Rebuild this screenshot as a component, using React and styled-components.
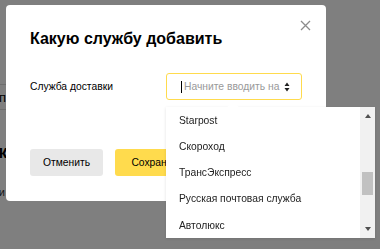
import React from "react";
import styled, { createGlobalStyle } from "styled-components";

const Global = createGlobalStyle`
  html, body { margin: 0; padding: 0; background: #fff; }
  body { font-family: "Liberation Sans", Arial, sans-serif; width: 380px; height: 249px; overflow: hidden; }
`;

const Page = styled.div`
  width: 380px;
  height: 249px;
  padding-top: 84px;
  box-sizing: border-box;
  display: flex;
  flex-direction: column;
`;

const PageRow = styled.div`
  width: 46px;
  margin-left: -40px;
  height: 24px;
  border-top: 1px solid #dcdcdc;
  border-bottom: 1px solid #dcdcdc;
  display: flex;
  align-items: center;
  justify-content: flex-end;
  font-size: 13px;
  color: #000;
  overflow: hidden;
`;

const PageHeading = styled.div`
  width: 46px;
  margin-left: -40px;
  margin-top: 30px;
  text-align: right;
  font-size: 18px;
  font-weight: bold;
  line-height: 24px;
  color: #000;
  white-space: nowrap;
`;

const PageNote = styled.div`
  width: 46px;
  margin-left: -41px;
  margin-top: 22px;
  text-align: right;
  font-size: 11px;
  color: #333;
  white-space: nowrap;
`;

const Overlay = styled.div`
  position: fixed;
  inset: 0;
  background: rgba(0, 0, 0, 0.5);
`;

const Modal = styled.div`
  position: fixed;
  top: 5px;
  left: 6px;
  width: 320px;
  height: 196px;
  box-sizing: border-box;
  background: #fff;
  border-radius: 4px;
  padding: 24px 24px 0;
  display: flex;
  flex-direction: column;
`;

const Title = styled.h2`
  margin: 0;
  font-size: 16px;
  line-height: 20px;
  font-weight: bold;
  color: #000;
`;

const Close = styled.button`
  position: absolute;
  top: 15px;
  right: 15px;
  width: 11px;
  height: 11px;
  padding: 0;
  border: 0;
  background: none;
  display: flex;
`;

const Field = styled.div`
  margin-top: 24px;
  display: flex;
  align-items: center;
`;

const Label = styled.label`
  width: 136px;
  font-size: 10.3px;
  line-height: 13px;
  color: #000;
`;

const InputWrap = styled.div`
  position: relative;
  width: 136px;
  height: 27px;
`;

const Input = styled.div`
  box-sizing: border-box;
  width: 100%;
  height: 100%;
  border: 1px solid #ffdb4d;
  border-radius: 3px;
  padding: 0 11px 0 14px;
  display: flex;
  align-items: center;
  overflow: hidden;
`;

const Caret = styled.span`
  width: 1px;
  height: 12px;
  background: #000;
  flex: none;
`;

const Placeholder = styled.span`
  flex: 1;
  font-size: 10.3px;
  color: #999;
  white-space: nowrap;
  overflow: hidden;
  margin: 0 3px 0 2px;
`;

const Popup = styled.div`
  position: absolute;
  top: 34px;
  left: 0;
  width: 209px;
  height: 131px;
  background: #fff;
  box-shadow: 0 1px 3px rgba(0, 0, 0, 0.12);
  display: flex;
`;

const Tail = styled.div`
  position: absolute;
  top: -4px;
  left: 63px;
  width: 8px;
  height: 8px;
  background: #fff;
  transform: rotate(45deg);
`;

const List = styled.ul`
  list-style: none;
  margin: 0;
  padding: 0;
  flex: 1;
  position: relative;
`;

const Item = styled.li`
  height: 26.25px;
  display: flex;
  align-items: center;
  padding-left: 13px;
  font-size: 10.3px;
  color: #222;
  white-space: nowrap;
`;

const Scrollbar = styled.div`
  width: 15px;
  background: #f1f1f1;
  position: relative;
  display: flex;
  flex-direction: column;
  justify-content: space-between;
  align-items: center;
  padding: 7px 0;
  box-sizing: border-box;
`;

const Thumb = styled.div`
  position: absolute;
  left: 2px;
  top: 65px;
  width: 11px;
  height: 23px;
  background: #c1c1c1;
`;

const Arrow = styled.span`
  width: 0;
  height: 0;
  border-left: 3.5px solid transparent;
  border-right: 3.5px solid transparent;
  ${(p) => (p.$down ? "border-top: 4px solid #505050;" : "border-bottom: 4px solid #505050;")}
`;

const Buttons = styled.div`
  margin-top: 49px;
  display: flex;
  gap: 12px;
`;

const Button = styled.button`
  height: 27px;
  width: ${(p) => p.$w}px;
  border: 0;
  border-radius: 3px;
  background: ${(p) => (p.$primary ? "#ffdb4d" : "#e8e8e8")};
  font-family: inherit;
  font-size: 10.3px;
  color: #000;
  padding: 0;
`;

const items = ["Starpost", "Скороход", "ТрансЭкспресс", "Русская почтовая служба", "Автолюкс"];

export default function App() {
  return (
    <>
      <Global />
      <Page>
        <PageRow>Тип</PageRow>
        <PageHeading>Служе</PageHeading>
        <PageNote>и</PageNote>
      </Page>
      <Overlay />
      <Modal>
        <Title>Какую службу добавить</Title>
        <Close aria-label="Закрыть">
          <svg width="11" height="11" viewBox="0 0 11 11">
            <path d="M1 1L10 10M10 1L1 10" stroke="#8c8c8c" strokeWidth="1.3" fill="none" />
          </svg>
        </Close>
        <Field>
          <Label>Служба доставки</Label>
          <InputWrap>
            <Input>
              <Caret />
              <Placeholder>Начните вводить на</Placeholder>
              <svg width="6" height="10" viewBox="0 0 6 10">
                <path d="M0.5 4L3 0.5L5.5 4Z M0.5 6L3 9.5L5.5 6Z" fill="#222" />
              </svg>
            </Input>
            <Popup>
              <Tail />
              <List>
                {items.map((t) => (
                  <Item key={t}>{t}</Item>
                ))}
              </List>
              <Scrollbar>
                <Arrow />
                <Thumb />
                <Arrow $down />
              </Scrollbar>
            </Popup>
          </InputWrap>
        </Field>
        <Buttons>
          <Button $w={73}>Отменить</Button>
          <Button $w={84} $primary>Сохранить</Button>
        </Buttons>
      </Modal>
    </>
  );
}
